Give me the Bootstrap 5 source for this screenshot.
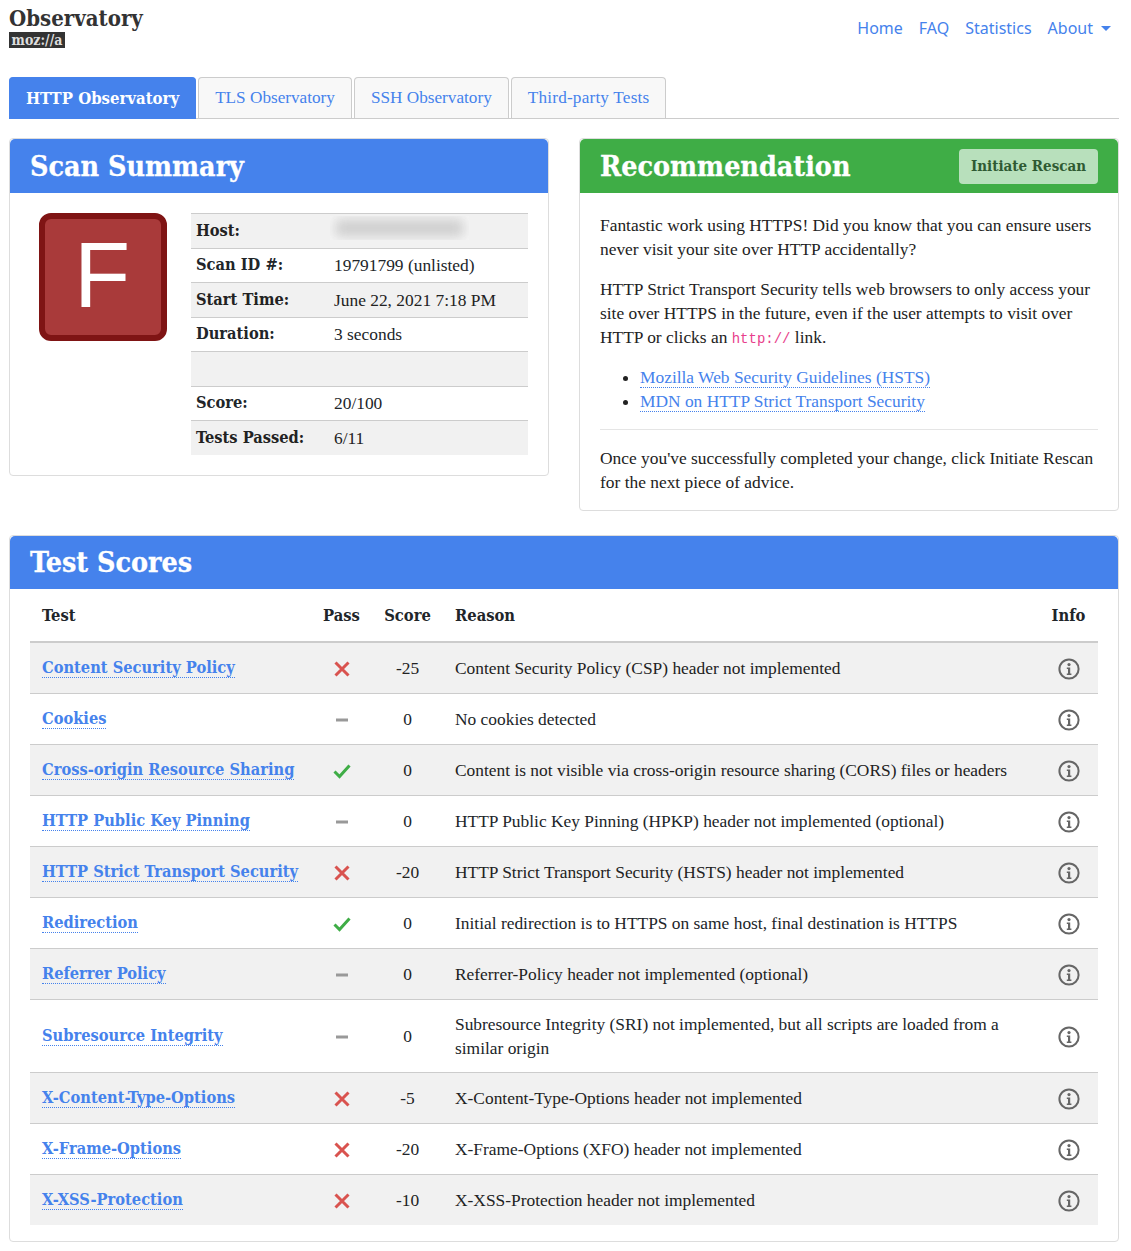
<!DOCTYPE html>
<html lang="en">
<head>
    <meta charset="UTF-8">
    <meta name="viewport" content="width=device-width, initial-scale=1.0">
    <title>Observatory by Mozilla</title>
    <link href="https://cdn.jsdelivr.net/npm/bootstrap@5.3.3/dist/css/bootstrap.min.css" rel="stylesheet">
    <style>
        body { font-family: "Liberation Serif", serif; font-size: 17.4px; line-height: 24px; color: #222; background: #fff; }
        a { color: #4582ec; }
        .page-wrap { padding: 0 12px 0 9px; }
        .slab { font-family: "DejaVu Serif", serif; font-stretch: condensed; font-weight: 700; }
        .top-bar { height: 77px; padding: 0; align-items: flex-start; }
        .brand-box { padding: 6px 0 0; margin: 0; color: #333; text-decoration: none; display: block; font-size: 22px; line-height: 24px; }
        .moz-tag { display: block; width: 56px; height: 16px; margin-top: 2px; background: #333; color: #ddd; font-size: 14px; line-height: 16px; text-align: center; }
        .top-links { font-family: "Noto Sans", sans-serif; font-size: 16px; margin-top: 16px; }
        .top-links .nav-link { padding: 0 8px; color: #4582ec; }
        .top-links .dropdown-toggle::after { margin-left: 8px; border-width: 5px 5px 0; vertical-align: 3px; }
        .obs-tabs { --bs-nav-tabs-border-color: #ccc; gap: 2px; }
        .obs-tabs .nav-link { height: 41px; margin-bottom: 0; padding: 8px 16px; font-size: 17.2px; color: #4582ec; background: #f8f8f8; border: 1px solid #ccc; border-bottom: 0; border-radius: 4px 4px 0 0; }
        .obs-tabs .nav-link.active { height: 42px; margin-bottom: -1px; color: #fff; background: #4582ec; border-color: #4582ec; font-family: "DejaVu Serif", serif; font-stretch: condensed; font-size: 16.6px; font-weight: 700; }
        .obs-tabs .tab-wide { letter-spacing: .2px; }
        .duo-cards { display: grid; grid-template-columns: 1fr 1fr; gap: 30px; align-items: start; margin-top: 19px; }
        .obs-card { --bs-card-border-color: #ddd; --bs-card-border-radius: 4px; border-color: #ddd; }
        .obs-head { display: flex; align-items: center; justify-content: space-between; height: 54px; padding: 0 20px; color: #fff; border: 0; }
        .obs-head h2 { margin: 0; font-size: 28.4px; line-height: 1; font-weight: 700; -webkit-text-stroke: .3px #fff; }
        .head-blue { background: #4582ec; }
        .head-green { background: #3fad46; }
        .rescan-btn { width: 139px; height: 35px; padding: 0; font-size: 15px; line-height: 35px; color: #2f5a33; background: #b8e0bc; border: 0; border-radius: 4px; }
        .summary-body { display: flex; padding: 20px; }
        .grade-box { flex: 0 0 128px; width: 128px; height: 128px; margin: 0 24px 0 9px; padding-right: 2px; background: #a93a3a; border: 6px solid #7f1414; border-radius: 12px; color: #fff; font-family: "Liberation Sans", sans-serif; font-size: 92px; line-height: 112px; text-align: center; }
        .summary-table { margin: 0; --bs-table-bg: transparent; --bs-table-striped-bg: #f1f1f1; --bs-table-striped-color: #222; --bs-table-border-color: #ccc; border-top: 1px solid #ccc; table-layout: fixed; }
        .summary-table th, .summary-table td { padding: 4.75px 5px; }
        .summary-table th { font-family: "DejaVu Serif", serif; font-stretch: condensed; font-size: 16.3px; }
        .summary-table tr:last-child > * { border-bottom: 0; }
        .label-col { width: 138px; }
        .host-blur { display: block; width: 139px; height: 24px; margin: -3px 0 3px -4px; padding: 3px 5px; overflow: hidden; background: #f6f6f6; }
        .host-blur i { display: block; height: 18px; background: #cfcfcf; filter: blur(6px); }
        .rec-body { padding: 20px 20px 16px; }
        .rec-body p { margin-bottom: 16px; }
        .rec-body p:last-child { margin-bottom: 0; }
        .rec-body ul { margin-bottom: 16px; padding-left: 40px; }
        .rec-body hr { margin: 16px 0; border-color: #999; }
        .rec-body code { font-family: "Liberation Mono", monospace; font-size: 14px; line-height: 1; color: #e83e8c; }
        .dot-link { text-decoration: none; border-bottom: 1px dotted #4582ec; }
        .scores-card { margin-top: 24px; margin-bottom: 9px; }
        .scores-card .obs-head { height: 53px; }
        .scores-body { padding: 0 20px 16px; }
        .score-table { margin: 0; table-layout: fixed; --bs-table-bg: transparent; --bs-table-striped-bg: #f1f1f1; --bs-table-striped-color: #222; --bs-table-border-color: #ccc; }
        .score-table th { padding: 15px 12px 13px; border-bottom: 2px solid #ccc; font-family: "DejaVu Serif", serif; font-stretch: condensed; font-size: 16.4px; }
        .score-table td { height: 51px; padding: 12px; vertical-align: middle; }
        .score-table tbody tr:last-child > * { border-bottom: 0; }
        .score-table > :not(:first-child) { border-top: 0; }
        .col-test { width: 281px; }
        .col-pass { width: 61px; }
        .col-score { width: 71px; }
        .col-info { width: 59px; }
        .test-link { font-family: "DejaVu Serif", serif; font-stretch: condensed; font-size: 16.3px; font-weight: 700; }
        .row-icon { display: block; margin: 1px auto -1px; }
    </style>
</head>
<body>
<div class="page-wrap">
    <nav class="navbar top-bar">
        <a class="brand-box slab" href="#">Observatory<span class="moz-tag slab">moz://a</span></a>
        <ul class="nav top-links">
            <li class="nav-item"><a class="nav-link" href="#">Home</a></li>
            <li class="nav-item"><a class="nav-link" href="#">FAQ</a></li>
            <li class="nav-item"><a class="nav-link" href="#">Statistics</a></li>
            <li class="nav-item"><a class="nav-link dropdown-toggle" href="#">About</a></li>
        </ul>
    </nav>

    <ul class="nav nav-tabs obs-tabs">
        <li class="nav-item"><a class="nav-link active" href="#">HTTP Observatory</a></li>
        <li class="nav-item"><a class="nav-link" href="#">TLS Observatory</a></li>
        <li class="nav-item"><a class="nav-link" href="#">SSH Observatory</a></li>
        <li class="nav-item"><a class="nav-link tab-wide" href="#">Third-party Tests</a></li>
    </ul>

    <div class="duo-cards">
        <div class="card obs-card">
            <div class="card-header obs-head head-blue"><h2 class="slab">Scan Summary</h2></div>
            <div class="summary-body">
                <div class="grade-box">F</div>
                <table class="table table-sm table-striped summary-table">
                    <colgroup><col class="label-col"><col></colgroup>
                    <tbody>
                        <tr><th>Host:</th><td><span class="host-blur"><i></i></span></td></tr>
                        <tr><th>Scan ID #:</th><td>19791799 (unlisted)</td></tr>
                        <tr><th>Start Time:</th><td>June 22, 2021 7:18 PM</td></tr>
                        <tr><th>Duration:</th><td>3 seconds</td></tr>
                        <tr><th>&nbsp;</th><td></td></tr>
                        <tr><th>Score:</th><td>20/100</td></tr>
                        <tr><th>Tests Passed:</th><td>6/11</td></tr>
                    </tbody>
                </table>
            </div>
        </div>
        <div class="card obs-card">
            <div class="card-header obs-head head-green">
                <h2 class="slab">Recommendation</h2>
                <a class="btn rescan-btn slab" href="#">Initiate Rescan</a>
            </div>
            <div class="rec-body">
                <p>Fantastic work using HTTPS! Did you know that you can ensure users never visit your site over HTTP accidentally?</p>
                <p>HTTP Strict Transport Security tells web browsers to only access your site over HTTPS in the future, even if the user attempts to visit over HTTP or clicks an <code>http://</code> link.</p>
                <ul>
                    <li><a class="dot-link" href="#">Mozilla Web Security Guidelines (HSTS)</a></li>
                    <li><a class="dot-link" href="#">MDN on HTTP Strict Transport Security</a></li>
                </ul>
                <hr>
                <p>Once you've successfully completed your change, click Initiate Rescan for the next piece of advice.</p>
            </div>
        </div>
    </div>

    <div class="card obs-card scores-card">
        <div class="card-header obs-head head-blue"><h2 class="slab">Test Scores</h2></div>
        <div class="scores-body">
            <table class="table table-striped score-table">
                <colgroup><col class="col-test"><col class="col-pass"><col class="col-score"><col><col class="col-info"></colgroup>
                <thead><tr><th>Test</th><th class="text-center">Pass</th><th class="text-center">Score</th><th>Reason</th><th class="text-center">Info</th></tr></thead>
                <tbody id="scoreRows"></tbody>
            </table>
        </div>
    </div>
</div>

<svg width="0" height="0" class="d-none">
    <symbol id="ic-x" viewBox="0 0 16 16"><path d="M1.5 1.5l13 13M14.5 1.5l-13 13" stroke="#d9534f" stroke-width="3" fill="none"/></symbol>
    <symbol id="ic-dash" viewBox="0 0 16 16"><path d="M2 8h12" stroke="#999" stroke-width="3" fill="none"/></symbol>
    <symbol id="ic-check" viewBox="0 0 18 16"><path d="M1.5 8.5l5 5L16.5 2.5" stroke="#3fad46" stroke-width="3" fill="none"/></symbol>
    <symbol id="ic-info" viewBox="0 0 22 22"><circle cx="11" cy="11" r="9.6" stroke="#666" stroke-width="2" fill="none"/><circle cx="11" cy="6.6" r="1.6" fill="#666"/><path d="M8.8 9.6h3.4v6h1.2v1.4H8.8v-1.4h1.2v-4.6H8.8z" fill="#666"/></symbol>
</svg>

<script src="https://cdn.jsdelivr.net/npm/bootstrap@5.3.3/dist/js/bootstrap.bundle.min.js"></script>
<script>
    const tests = [
        ['Content Security Policy', 'x', '-25', 'Content Security Policy (CSP) header not implemented'],
        ['Cookies', 'dash', '0', 'No cookies detected'],
        ['Cross-origin Resource Sharing', 'check', '0', 'Content is not visible via cross-origin resource sharing (CORS) files or headers'],
        ['HTTP Public Key Pinning', 'dash', '0', 'HTTP Public Key Pinning (HPKP) header not implemented (optional)'],
        ['HTTP Strict Transport Security', 'x', '-20', 'HTTP Strict Transport Security (HSTS) header not implemented'],
        ['Redirection', 'check', '0', 'Initial redirection is to HTTPS on same host, final destination is HTTPS'],
        ['Referrer Policy', 'dash', '0', 'Referrer-Policy header not implemented (optional)'],
        ['Subresource Integrity', 'dash', '0', 'Subresource Integrity (SRI) not implemented, but all scripts are loaded from a similar origin'],
        ['X-Content-Type-Options', 'x', '-5', 'X-Content-Type-Options header not implemented'],
        ['X-Frame-Options', 'x', '-20', 'X-Frame-Options (XFO) header not implemented'],
        ['X-XSS-Protection', 'x', '-10', 'X-XSS-Protection header not implemented']
    ];
    const sizes = { x: [16, 16], dash: [16, 16], check: [18, 16] };
    document.getElementById('scoreRows').innerHTML = tests.map(t => `
        <tr>
            <td><a class="dot-link test-link" href="#">${t[0]}</a></td>
            <td><svg class="row-icon" width="${sizes[t[1]][0]}" height="${sizes[t[1]][1]}"><use href="#ic-${t[1]}"/></svg></td>
            <td class="text-center">${t[2]}</td>
            <td>${t[3]}</td>
            <td><svg class="row-icon" width="22" height="22"><use href="#ic-info"/></svg></td>
        </tr>`).join('');
</script>
</body>
</html>
